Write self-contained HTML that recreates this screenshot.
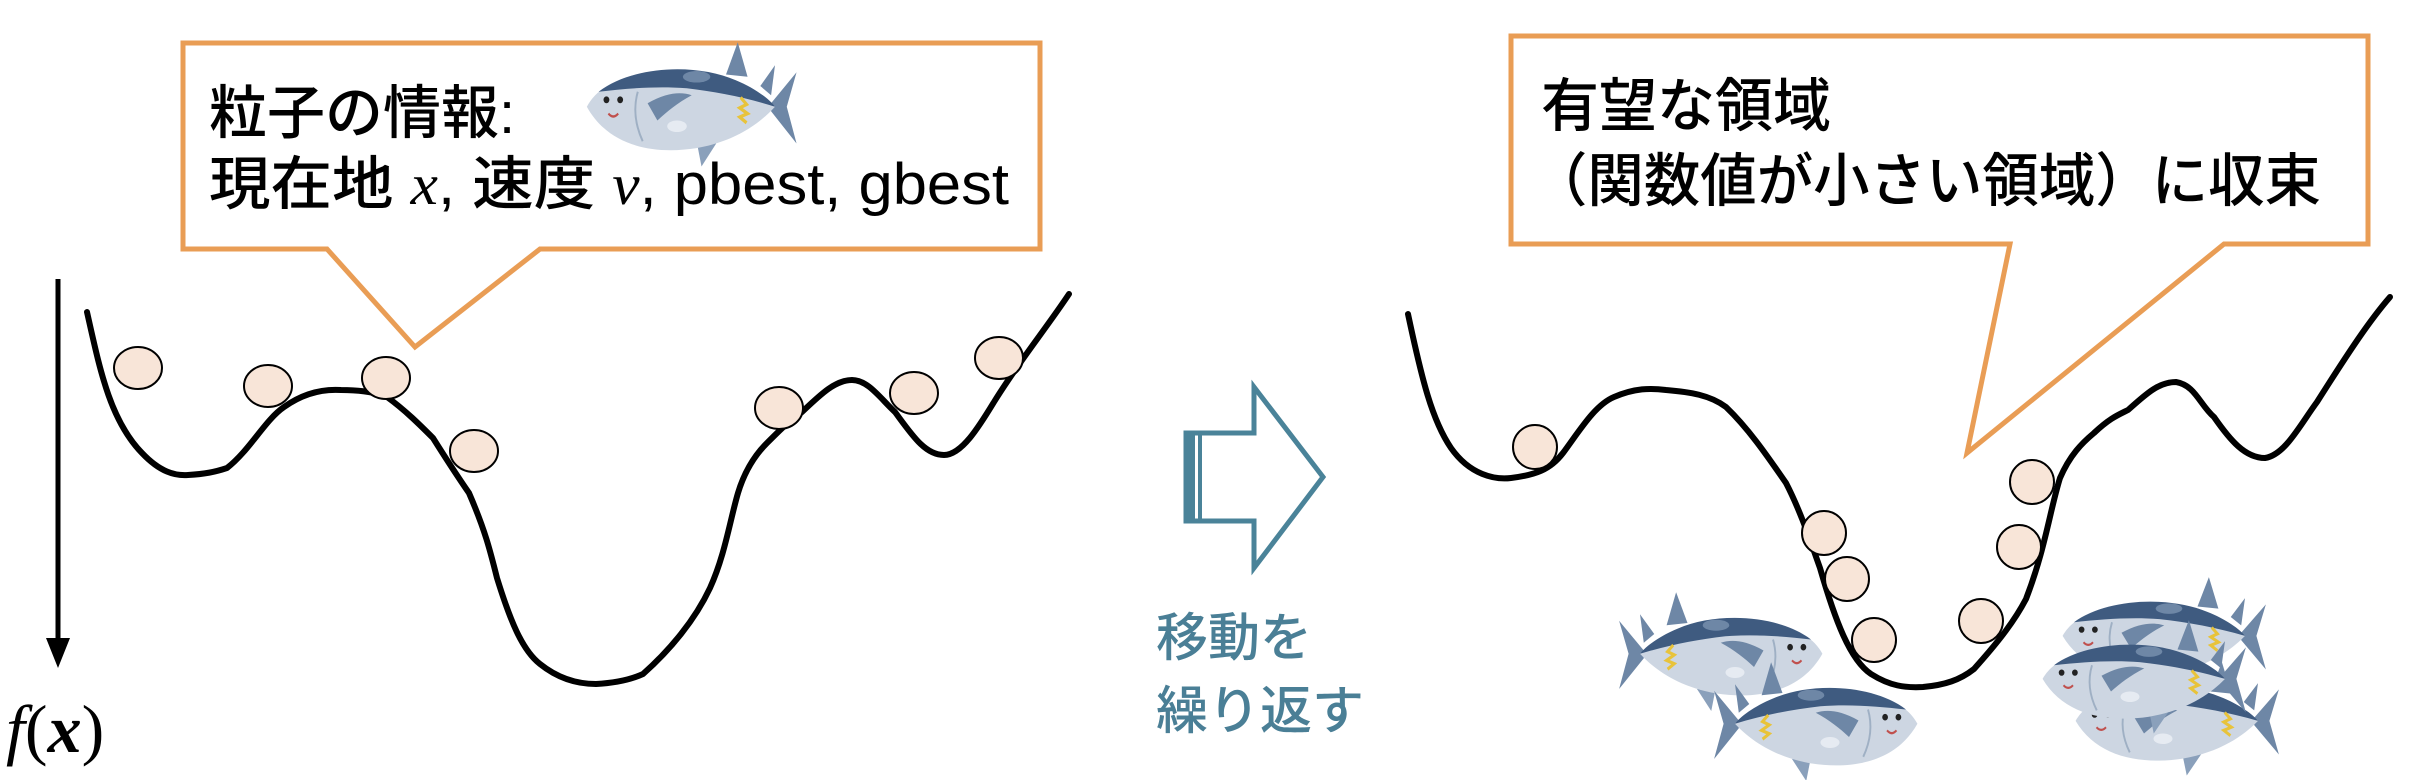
<!DOCTYPE html>
<html><head><meta charset="utf-8"><style>
html,body{margin:0;padding:0;background:#fff;}
svg{display:block}
.jp{font-family:"Liberation Sans","Noto Sans CJK JP",sans-serif;font-weight:500;}
</style></head><body>
<svg width="2428" height="780" viewBox="0 0 2428 780" xmlns="http://www.w3.org/2000/svg">
<defs>
<g id="fish">
 <path d="M150 30 L162 2 L172 32 Z" fill="#6e87a6"/>
 <path d="M185 40 L200 22 L196 48 Z" fill="#6e87a6"/>
 <path d="M120 88 L125 110 L140 90 Z" fill="#8aa0bb"/>
 <path d="M196 55 L222 28 L212 58 L222 90 L196 62 Z" fill="#6e87a6"/>
 <path d="M8 58 C25 30 80 22 130 30 C165 36 190 48 200 58 C185 72 160 88 120 94 C75 100 30 92 8 58 Z" fill="#cdd6e2"/>
 <path d="M20 45 C55 22 120 20 160 35 C180 42 195 52 200 58 C170 50 140 45 110 42 C80 40 50 42 20 45 Z" fill="#3f5b80"/>
 <path d="M165 50 l6 6 l-7 3 l8 5 l-8 3 l7 5" stroke="#e8c33a" stroke-width="3" fill="none"/>
 <path d="M70 55 C90 45 105 45 115 48 C100 55 90 62 80 70 Z" fill="#6e87a6"/>
 <path d="M60 45 C55 60 58 75 65 88" stroke="#9fb0c4" stroke-width="2" fill="none"/>
 <circle cx="28" cy="52" r="3" fill="#222"/>
 <circle cx="42" cy="52" r="3" fill="#222"/>
 <path d="M30 64 q5 5 10 0" stroke="#c0504d" stroke-width="2" fill="none"/>
 <ellipse cx="100" cy="75" rx="10" ry="5" fill="#e6ebf2"/>
 <ellipse cx="120" cy="32" rx="14" ry="5" fill="#6e87a6"/>
</g>
</defs>

<!-- left callout -->
<path d="M183 43 L1040 43 L1040 249 L540 249 L415 347 L327 249 L183 249 Z" fill="#fff" stroke="#e99d55" stroke-width="5"/>
<text class="jp" x="209" y="133" font-size="58" fill="#000">粒子の情報:</text>
<text x="209" y="204" font-size="58" fill="#000" textLength="800" lengthAdjust="spacingAndGlyphs"><tspan class="jp">現在地 </tspan><tspan font-family="Liberation Serif,serif" font-style="italic">x</tspan><tspan class="jp">, 速度 </tspan><tspan font-family="Liberation Serif,serif" font-style="italic">v</tspan><tspan class="jp">, pbest, gbest</tspan></text>
<use href="#fish" transform="translate(579,40) scale(0.98,1.15)"/>

<!-- f(x) axis -->
<line x1="58" y1="279" x2="58" y2="640" stroke="#000" stroke-width="5"/>
<path d="M46 638 L70 638 L58 668 Z" fill="#000"/>
<text x="6" y="752" font-size="68" font-family="Liberation Serif,serif" font-style="italic" fill="#000">f<tspan font-style="normal">(</tspan><tspan font-weight="bold">x</tspan><tspan font-style="normal">)</tspan></text>

<!-- left curve -->
<path d="M87 312 C100 370 110 420 142 453 C160 472 175 476 188 475 C205 474 215 472 227 468 C250 450 265 420 284 407 C305 392 325 389 341 390 C360 390 375 392 387 397 C405 410 420 425 433 438 C450 465 460 480 469 493 C485 530 490 550 497 578 C510 620 522 650 540 664 C560 680 580 684 596 684 C615 683 630 680 643 674 C670 650 695 620 710 588 C725 555 730 520 738 493 C745 470 755 455 767 443 C780 430 790 420 802 412 C820 395 835 380 852 380 C868 380 880 398 895 412 C912 435 925 455 944 455 C962 455 980 425 994 402 C1020 360 1045 330 1069 294" fill="none" stroke="#000" stroke-width="6" stroke-linecap="round"/>
<g fill="#f8e5d8" stroke="#000" stroke-width="2">
<ellipse cx="138" cy="368" rx="24" ry="21"/>
<ellipse cx="268" cy="386" rx="24" ry="21"/>
<ellipse cx="386" cy="378" rx="24" ry="21"/>
<ellipse cx="474" cy="451" rx="24" ry="21"/>
<ellipse cx="779" cy="408" rx="24" ry="21"/>
<ellipse cx="914" cy="393" rx="24" ry="21"/>
<ellipse cx="999" cy="358" rx="24" ry="21"/>
</g>

<!-- middle arrow -->
<path d="M1186 433 L1254 433 L1254 387 L1323 477 L1254 568 L1254 521 L1186 521 Z" fill="#fff" stroke="#4a8399" stroke-width="5"/>
<rect x="1186" y="433" width="9" height="88" fill="#4a8399"/>
<rect x="1198" y="433" width="4" height="88" fill="#4a8399"/>
<text class="jp" x="1156" y="656" font-size="52" fill="#4a7f96">移動を</text>
<text class="jp" x="1156" y="729" font-size="52" fill="#4a7f96">繰り返す</text>

<!-- right callout -->
<path d="M1511 36 L2368 36 L2368 244 L2224 244 L1967 453 L2010 244 L1511 244 Z" fill="#fff" stroke="#e99d55" stroke-width="5"/>
<text class="jp" x="1541" y="126" font-size="58" fill="#000">有望な領域</text>
<text class="jp" x="1531" y="201" font-size="58" fill="#000" textLength="790" lengthAdjust="spacingAndGlyphs">（関数値が小さい領域）に収束</text>

<!-- right curve -->
<path d="M1408 314 C1422 380 1432 420 1451 448 C1470 475 1495 480 1511 478 C1535 475 1550 470 1563 453 C1580 430 1595 405 1614 397 C1635 388 1650 388 1666 390 C1690 392 1710 395 1726 407 C1750 430 1770 460 1786 483 C1800 510 1810 540 1820 568 C1835 620 1850 660 1871 674 C1890 686 1905 688 1923 687 C1945 685 1960 680 1974 669 C2000 640 2015 620 2026 599 C2045 550 2050 510 2060 478 C2070 455 2082 443 2094 433 C2110 418 2118 415 2128 410 C2145 395 2158 382 2176 382 C2195 385 2200 405 2214 417 C2230 440 2245 458 2265 458 C2285 455 2300 425 2317 402 C2350 350 2370 320 2390 297" fill="none" stroke="#000" stroke-width="6" stroke-linecap="round"/>
<g fill="#f8e5d8" stroke="#000" stroke-width="2">
<ellipse cx="1535" cy="447" rx="22" ry="22"/>
<ellipse cx="1824" cy="533" rx="22" ry="22"/>
<ellipse cx="1847" cy="579" rx="22" ry="22"/>
<ellipse cx="1874" cy="640" rx="22" ry="22"/>
<ellipse cx="2032" cy="482" rx="22" ry="22"/>
<ellipse cx="2019" cy="547" rx="22" ry="22"/>
<ellipse cx="1981" cy="621" rx="22" ry="22"/>
</g>

<!-- fish groups -->
<use href="#fish" transform="translate(1830,590) scale(-0.95,1.1)"/>
<use href="#fish" transform="translate(1925,660) scale(-0.95,1.1)"/>
<use href="#fish" transform="translate(2055,575) scale(0.95,1.05)"/>
<use href="#fish" transform="translate(2068,660) scale(0.95,1.05)"/>
<use href="#fish" transform="translate(2035,618) scale(0.95,1.05)"/>
</svg>
</body></html>
